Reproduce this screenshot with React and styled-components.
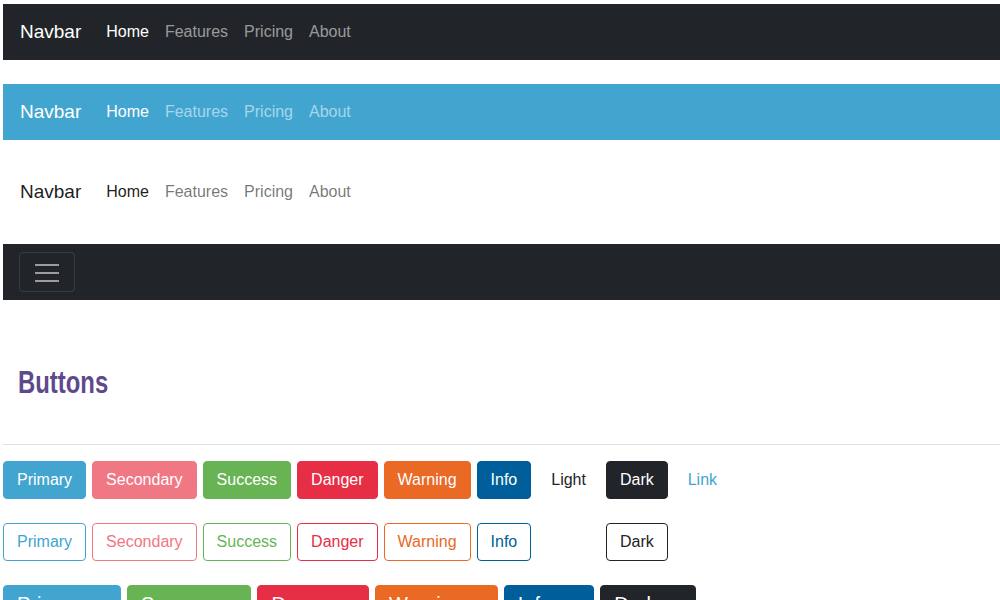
import React from "react";
import styled, { createGlobalStyle, css } from "styled-components";

const GlobalStyle = createGlobalStyle`
  html, body {
    margin: 0;
    padding: 0;
    overflow: hidden;
    background: #ffffff;
  }
  body {
    font-family: "Liberation Sans", Arial, sans-serif;
    font-size: 16px;
    line-height: 1.5;
    color: #212529;
  }
  * { box-sizing: border-box; }
`;

const palette = {
  primary: "#42a5d0",
  secondary: "#f07784",
  success: "#68b454",
  danger: "#e62e45",
  warning: "#e96925",
  info: "#005f9a",
  light: "#ffffff",
  dark: "#212529",
};

const navThemes = {
  dark: {
    bg: "#212529",
    brand: "#ffffff",
    active: "#ffffff",
    link: "rgba(255,255,255,0.55)",
  },
  info: {
    bg: "#42a5d0",
    brand: "#ffffff",
    active: "#ffffff",
    link: "rgba(255,255,255,0.55)",
  },
  light: {
    bg: "#ffffff",
    brand: "rgba(0,0,0,0.9)",
    active: "rgba(0,0,0,0.9)",
    link: "rgba(0,0,0,0.55)",
  },
};

const Page = styled.div`
  padding: 4px 0 0 3px;
`;

const NavStack = styled.div`
  display: flex;
  flex-direction: column;
  gap: 24px;
`;

const Navbar = styled.nav`
  display: flex;
  align-items: center;
  height: 56px;
  padding: 8px 16px 8px 17px;
  background: ${(p) => navThemes[p.$variant].bg};
`;

const Brand = styled.a`
  font-size: 19px;
  line-height: 30px;
  margin-right: 17px;
  text-decoration: none;
  color: ${(p) => navThemes[p.$variant].brand};
`;

const NavList = styled.div`
  display: flex;
  align-items: center;
`;

const NavLink = styled.a`
  padding: 8px;
  font-size: 16px;
  line-height: 24px;
  text-decoration: none;
  color: ${(p) =>
    p.$active ? navThemes[p.$variant].active : navThemes[p.$variant].link};
`;

const Toggler = styled.button`
  display: flex;
  align-items: center;
  justify-content: center;
  width: 56px;
  height: 40px;
  margin-left: -1px;
  padding: 4px 12px;
  background: transparent;
  border: 1px solid rgba(255, 255, 255, 0.1);
  border-radius: 4px;
`;

const Section = styled.section`
  padding-top: 64px;
`;

const Heading = styled.h1`
  display: inline-block;
  margin: 0 0 0 15px;
  font-size: 31px;
  line-height: 37px;
  font-weight: 700;
  color: #5d4a8d;
  transform: scaleX(0.77);
  transform-origin: left center;
`;

const Rule = styled.hr`
  margin: 43px 0 16px;
  border: 0;
  border-top: 1px solid #e3e3e3;
`;

const ButtonRows = styled.div`
  display: flex;
  flex-direction: column;
  gap: 24px;
`;

const ButtonRow = styled.div`
  display: flex;
  gap: 6px;
`;

const Btn = styled.button`
  font-family: "Liberation Sans", Arial, sans-serif;
  font-size: 16px;
  line-height: 24px;
  padding: 6px 13px;
  border-radius: 4px;
  border: 1px solid
    ${(p) => (p.$tone === "link" ? "transparent" : palette[p.$tone])};
  white-space: nowrap;
  cursor: pointer;
  ${(p) =>
    p.$tone === "link"
      ? css`
          background: transparent;
          color: ${palette.primary};
        `
      : p.$outline
      ? css`
          background: transparent;
          color: ${palette[p.$tone]};
        `
      : css`
          background: ${palette[p.$tone]};
          color: ${p.$tone === "light" ? "#212529" : "#ffffff"};
        `}
  ${(p) =>
    p.$large &&
    css`
      font-size: 20px;
      padding: 6px ${p.$padRight}px 6px 13px;
    `}
`;

const HamburgerIcon = () => (
  <svg width="30" height="30" viewBox="0 0 30 30" aria-hidden="true">
    <path
      d="M3 8h24M3 16h24M3 24h24"
      stroke="rgba(255,255,255,0.55)"
      strokeWidth="2"
      fill="none"
    />
  </svg>
);

const links = ["Home", "Features", "Pricing", "About"];

const NavDemo = ({ variant }) => (
  <Navbar $variant={variant}>
    <Brand $variant={variant} href="#">
      Navbar
    </Brand>
    <NavList>
      {links.map((l, i) => (
        <NavLink key={l} href="#" $variant={variant} $active={i === 0}>
          {l}
        </NavLink>
      ))}
    </NavList>
  </Navbar>
);

const solid = [
  ["primary", "Primary"],
  ["secondary", "Secondary"],
  ["success", "Success"],
  ["danger", "Danger"],
  ["warning", "Warning"],
  ["info", "Info"],
  ["light", "Light"],
  ["dark", "Dark"],
  ["link", "Link"],
];

const outline = solid.filter(([t]) => t !== "link");

const large = [
  ["primary", "Primary", 34],
  ["success", "Success", 34],
  ["danger", "Danger", 31],
  ["warning", "Warning", 34],
  ["info", "Info", 42],
  ["dark", "Dark", 39],
];

export default function App() {
  return (
    <Page>
      <GlobalStyle />
      <NavStack>
        <NavDemo variant="dark" />
        <NavDemo variant="info" />
        <NavDemo variant="light" />
        <Navbar $variant="dark">
          <Toggler aria-label="Toggle navigation">
            <HamburgerIcon />
          </Toggler>
        </Navbar>
      </NavStack>
      <Section>
        <Heading>Buttons</Heading>
        <Rule />
        <ButtonRows>
          <ButtonRow>
            {solid.map(([t, label]) => (
              <Btn key={t} $tone={t}>
                {label}
              </Btn>
            ))}
          </ButtonRow>
          <ButtonRow>
            {outline.map(([t, label]) => (
              <Btn key={t} $tone={t} $outline>
                {label}
              </Btn>
            ))}
          </ButtonRow>
          <ButtonRow>
            {large.map(([t, label, pr]) => (
              <Btn key={t} $tone={t} $large $padRight={pr}>
                {label}
              </Btn>
            ))}
          </ButtonRow>
        </ButtonRows>
      </Section>
    </Page>
  );
}
